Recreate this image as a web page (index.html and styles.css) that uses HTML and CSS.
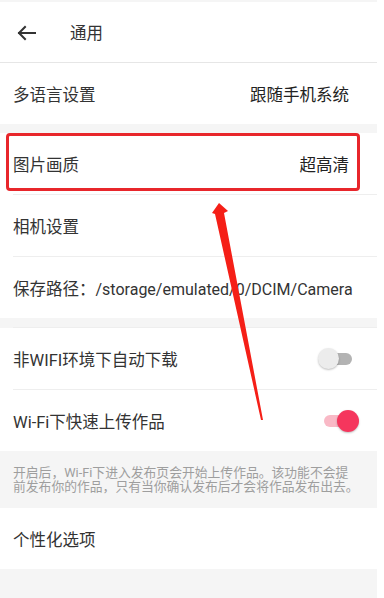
FILE: index.html
```html
<!DOCTYPE html>
<html lang="zh-CN">
<head>
<meta charset="utf-8">
<link rel="stylesheet" href="styles.css">
</head>
<body>
<div class="page">
  <header class="header">
    <svg class="back" width="20" height="16" viewBox="0 0 20 16"><path d="M18 8H2M8 2L2 8l6 6" fill="none" stroke="#333" stroke-width="2" stroke-linecap="square"/></svg>
    <span class="title">通用</span>
  </header>
  <div class="group">
    <div class="row"><span class="label">多语言设置</span><span class="value">跟随手机系统</span></div>
  </div>
  <div class="group gap">
    <div class="row"><span class="label">图片画质</span><span class="value">超高清</span></div>
    <div class="row line"><span class="label">相机设置</span></div>
    <div class="row line"><span class="label">保存路径：<span class="path">/storage/emulated/0/DCIM/Camera</span></span></div>
  </div>
  <div class="group gap2">
    <div class="row line"><span class="label">非WIFI环境下自动下载</span><span class="switch"><span class="track"></span><span class="thumb"></span></span></div>
    <div class="row line"><span class="label">Wi-Fi下快速上传作品</span><span class="switch on"><span class="track"></span><span class="thumb"></span></span></div>
  </div>
  <p class="note">开启后，Wi-Fi下进入发布页会开始上传作品。该功能不会提<br>前发布你的作品，只有当你确认发布后才会将作品发布出去。</p>
  <div class="group">
    <div class="row"><span class="label">个性化选项</span></div>
  </div>
  <div class="highlight"></div>
  <svg class="pointer" width="377" height="598" viewBox="0 0 377 598"><polygon points="219,203 228,211 224,213 263,420 261,420 215,214 212,213" fill="#f51f17"/></svg>
</div>
</body>
</html>
```
FILE: styles.css
```css
html, body { margin: 0; padding: 0; background: #fff; }
body { font-family: Roboto, "Noto Sans CJK SC", sans-serif; color: #333; }
.page { position: relative; width: 377px; height: 598px; background: #f5f5f5; padding-top: 2px; box-sizing: border-box; overflow: hidden; }
.header { height: 60px; background: #fff; border-bottom: 1px solid #e6e6e6; display: flex; align-items: center; }
.back { margin-left: 17px; margin-top: 2px; }
.title { margin-left: 33px; font-size: 16.5px; color: #333; }
.group { background: #fff; }
.gap { margin-top: 9px; }
.gap2 { margin-top: 10px; }
.row { height: 61px; display: flex; align-items: center; justify-content: space-between; padding: 0 27px 0 13px; font-size: 16.5px; position: relative; }
.row.line::before { content: ""; position: absolute; left: 13px; right: 0; top: -1px; height: 1px; background: #eeeeee; }
.row.line { margin-top: 1px; }
.label { color: #333; white-space: nowrap; }
.path { font-size: 16px; }
.value { color: #222; margin-right: 1px; }
.switch { position: relative; width: 40px; height: 24px; margin-right: -8px; }
.track { position: absolute; left: 8px; top: 6px; width: 26px; height: 12px; border-radius: 6px; background: #b3b3b3; }
.thumb { position: absolute; left: 0; top: 1px; width: 21px; height: 21px; border-radius: 50%; background: #ececec; box-shadow: 0 1px 2px rgba(0,0,0,0.25); }
.switch.on .track { background: #f9b9c6; left: 6px; width: 24px; }
.switch.on .thumb { left: 19px; width: 22px; height: 22px; top: 1px; background: #f5365d; }
.note { margin: 0; padding: 15px 0 0 13px; height: 57px; box-sizing: border-box; font-size: 12.8px; line-height: 14px; color: #9e9e9e; white-space: nowrap; }
.highlight { position: absolute; left: 6px; top: 133px; width: 354px; height: 58px; border: 3px solid #e8262b; border-radius: 4px; box-sizing: border-box; }
.pointer { position: absolute; left: 0; top: 0; }
```
